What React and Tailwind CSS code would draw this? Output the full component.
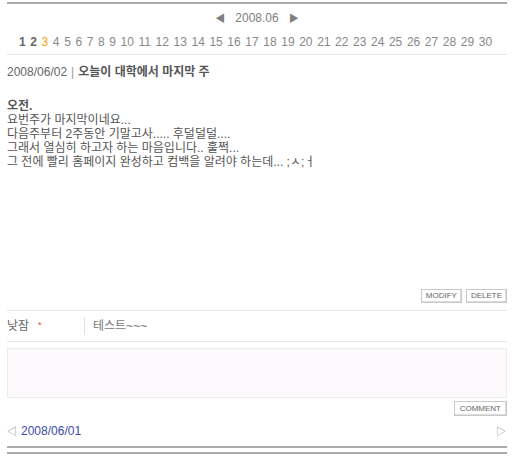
import React from 'react';

const days = Array.from({ length: 30 }, (_, i) => i + 1);

const SmallButton = ({ children, className = '' }) => (
  <button
    type="button"
    className={`h-[14px] px-[4px] border border-[#c8c8c8] bg-white text-[8px] leading-none text-[#666] shadow-[inset_-1px_-1px_0_#ddd] ${className}`}
  >
    {children}
  </button>
);

const App = () => {
  return (
    <div
      className="w-[512px] h-[458px] bg-white text-[#666] overflow-hidden"
      style={{ fontFamily: '"Liberation Sans", "Noto Sans CJK KR", sans-serif' }}
    >
      <div className="ml-[7px] w-[500px]">
        {/* top rule */}
        <div className="h-[2px] mt-[2px] bg-[#ababab]" />

        {/* month nav */}
        <div className="h-[26px] flex items-center justify-center gap-[10px] pt-[2px] text-[12px] text-[#808080]">
          <span className="text-[10px]">◀</span>
          <span>2008.06</span>
          <span className="text-[10px]">▶</span>
        </div>

        {/* day list */}
        <div className="h-[24px] flex items-center pl-[12px] gap-[4.6px] text-[12px] text-[#888]">
          {days.map((d) => (
            <span
              key={d}
              className={
                d === 3
                  ? 'text-[#f5a300]'
                  : d < 3
                    ? 'font-bold text-[#666]'
                    : ''
              }
            >
              {d}
            </span>
          ))}
        </div>
        <div className="h-px bg-[#e6e6e6]" />

        {/* post title */}
        <div className="h-[34px] flex items-center text-[12px] text-[#666]">
          <span>2008/06/02</span>
          <span className="mx-[4px] text-[#999]">|</span>
          <span className="font-bold text-[#555]">오늘이 대학에서 마지막 주</span>
        </div>

        {/* body */}
        <div className="pt-[10px] h-[200px] text-[12px] leading-[14px] text-[#555]">
          <div className="font-bold">오전.</div>
          <div>요번주가 마지막이네요...</div>
          <div>다음주부터 2주동안 기말고사..... 후덜덜덜....</div>
          <div>그래서 열심히 하고자 하는 마음입니다.. 훌쩍...</div>
          <div>그 전에 빨리 홈페이지 완성하고 컴백을 알려야 하는데... ;ㅅ;ㅓ</div>
        </div>

        {/* modify/delete */}
        <div className="h-[21px] flex justify-end items-start gap-[4px]">
          <SmallButton>MODIFY</SmallButton>
          <SmallButton>DELETE</SmallButton>
        </div>
        <div className="h-px bg-[#e6e6e6]" />

        {/* comment author row */}
        <div className="h-[30px] flex items-center text-[12px]">
          <div className="w-[77px] flex items-center text-[#666]">
            <span>낮잠</span>
            <span className="ml-[9px] text-[9px] text-[#e04040]">*</span>
          </div>
          <div className="w-px h-[18px] bg-[#e0e0e0]" />
          <div className="pl-[8px] text-[#777]">테스트~~~</div>
        </div>
        <div className="h-px bg-[#e6e6e6]" />

        {/* comment textarea */}
        <div className="mt-[6px] h-[50px] border border-[#ececec] bg-[#fdf9fd]" />

        <div className="h-[18px] flex justify-end items-end">
          <SmallButton className="h-[15px] px-[5px]">COMMENT</SmallButton>
        </div>

        {/* prev / next */}
        <div className="h-[30px] flex items-center justify-between text-[12px]">
          <div className="flex items-center gap-[4px]">
            <span className="text-[10px] text-[#888]">◁</span>
            <span className="text-[#3a4bb0]">2008/06/01</span>
          </div>
          <span className="text-[10px] text-[#888] pr-[1px]">▷</span>
        </div>

        {/* bottom rules */}
        <div className="h-[2px] bg-[#ababab]" />
        <div className="h-[4px]" />
        <div className="h-[2px] bg-[#ababab]" />
      </div>
    </div>
  );
};

export default App;
